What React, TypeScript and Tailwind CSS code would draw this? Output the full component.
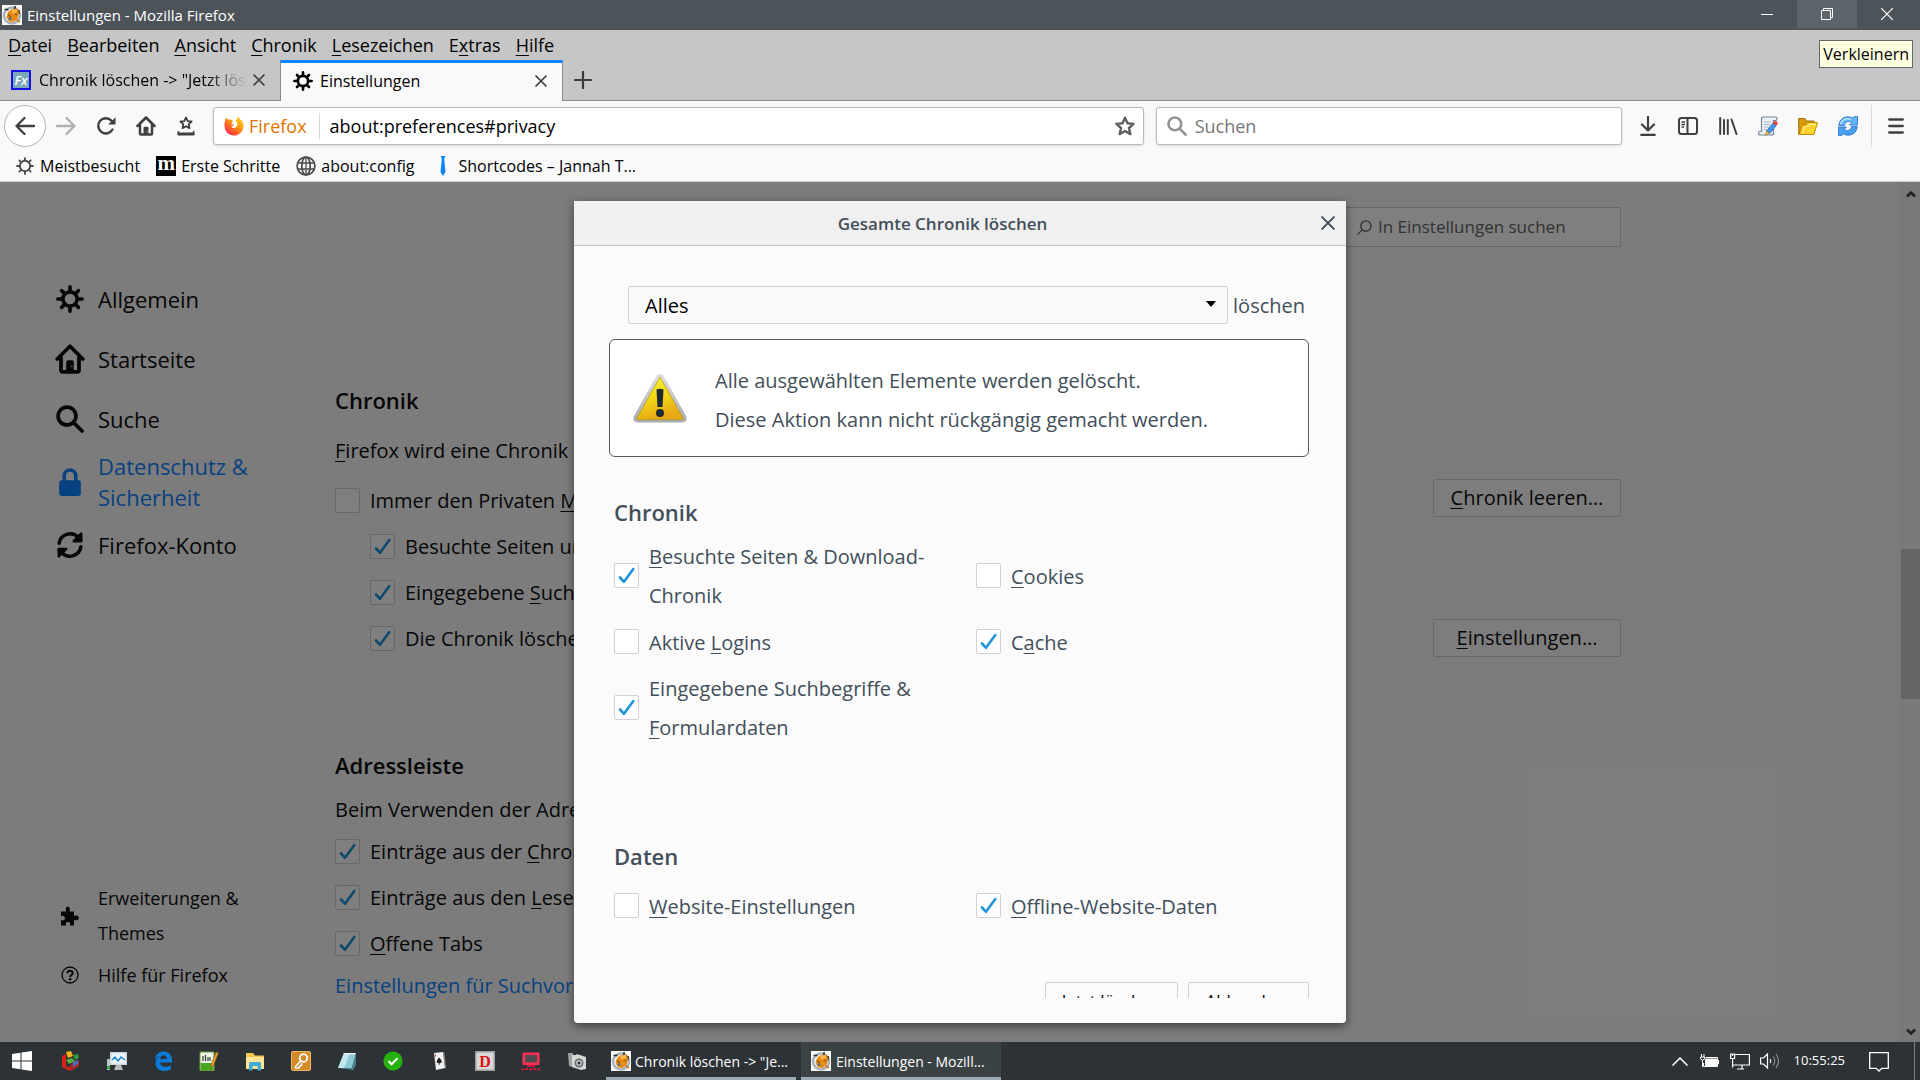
import type { ReactNode } from "react";

function K({ children }: { children: ReactNode }) {
  return <span className="underline decoration-1 underline-offset-[3px]">{children}</span>;
}

/* ---------- monochrome icons ---------- */

function Gear({ className = "" }: { className?: string }) {
  return (
    <svg viewBox="0 0 16 16" className={className} fill="none" stroke="currentColor" strokeLinecap="round" aria-hidden="true">
      <circle cx="8" cy="8" r="4.1" strokeWidth="2.1" />
      <path strokeWidth="2.1" d="M8 1.1v1.9M8 13v1.9M1.1 8H3M13 8h1.9M3.2 3.2l1.2 1.2M11.6 11.6l1.2 1.2M3.2 12.8l1.2-1.2M11.6 4.400l1.2-1.2" />
    </svg>
  );
}

function ThinGear({ className = "" }: { className?: string }) {
  return (
    <svg viewBox="0 0 16 16" className={className} fill="none" stroke="currentColor" strokeLinecap="round" aria-hidden="true">
      <circle cx="8" cy="8" r="4.6" strokeWidth="1.700" />
      <path strokeWidth="1.700" d="M8 1v1.500M8 13.500V15M1 8h1.500M13.500 8H15M3.050 3.050l1 1M11.950 11.950l1 1M3.050 12.950l1-1M11.950 4.050l1-1" />
    </svg>
  );
}

function House({ className = "" }: { className?: string }) {
  return (
    <svg viewBox="0 0 16 16" className={className} fill="none" stroke="currentColor" strokeLinecap="round" strokeLinejoin="round" aria-hidden="true">
      <path strokeWidth="2" d="M1.2 8 8 1.2 14.8 8M3.2 7v7a.8.8 0 0 0 .8.8h8a.8.8 0 0 0 .8-.8V7" />
      <path fill="currentColor" stroke="none" d="M6 15V9.6a1 1 0 0 1 1-1h2a1 1 0 0 1 1 1V15z" />
      <circle cx="8.9" cy="12" r=".5" fill="#fff" stroke="none" opacity=".6" />
    </svg>
  );
}

function Lens({ className = "" }: { className?: string }) {
  return (
    <svg viewBox="0 0 16 16" className={className} fill="none" stroke="currentColor" strokeWidth="2.100" strokeLinecap="round" aria-hidden="true">
      <circle cx="6.3" cy="6.3" r="5.1" />
      <path d="m10.2 10.2 4.7 4.7" />
    </svg>
  );
}

function ThinLens({ className = "" }: { className?: string }) {
  return (
    <svg viewBox="0 0 16 16" className={className} fill="none" stroke="currentColor" strokeWidth="1.400" strokeLinecap="round" aria-hidden="true">
      <circle cx="9.500" cy="6.500" r="5.500" />
      <path d="M5.500 10.500 1 15" />
    </svg>
  );
}

function Lock({ className = "" }: { className?: string }) {
  return (
    <svg viewBox="0 0 16 16" className={className} fill="currentColor" aria-hidden="true">
      <rect x="1.800" y="7" width="12.400" height="9" rx="1.400" />
      <path fill="none" stroke="currentColor" strokeWidth="2" d="M4.700 8V4.400a3.300 3.300 0 0 1 6.600 0V8" />
    </svg>
  );
}

function Sync({ className = "" }: { className?: string }) {
  return (
    <svg viewBox="0 0 16 16" className={className} fill="none" stroke="currentColor" strokeWidth="2" strokeLinecap="round" strokeLinejoin="round" aria-hidden="true">
      <path d="M1.800 7A6.300 6.300 0 0 1 12.600 3.600L14.200 5M14.200 9A6.300 6.300 0 0 1 3.400 12.400L1.800 11" />
      <path fill="currentColor" strokeWidth="1.400" d="M14.400 1.500v4.300h-4.300zM1.600 14.500v-4.300h4.300z" />
    </svg>
  );
}

function Puzzle({ className = "" }: { className?: string }) {
  return (
    <svg viewBox="0 0 18 20" className={className} fill="currentColor" aria-hidden="true">
      <path d="M0 5.500h5.200C4.400 4 4.600.6 6.800.6S9.200 4 8.400 5.500H13V10c1.400-.8 4.800-.8 4.800 1.900S14.400 14.600 13 13.800V19.500H8.800c.7-1.500.5-3.600-1.800-3.600s-2.500 2.100-1.800 3.600H0V14c1.500.8 3.900.6 3.900-1.700S1.500 9.700 0 10.400z" />
    </svg>
  );
}

function HelpRing({ className = "" }: { className?: string }) {
  return (
    <svg viewBox="0 0 18 18" className={className} fill="none" stroke="currentColor" aria-hidden="true">
      <circle cx="9" cy="9" r="8" strokeWidth="1.300" />
      <path strokeWidth="2" d="M6.300 7.200C6.300 3.900 11.700 3.900 11.700 7.100 11.700 9 9.100 8.900 9.100 11" />
      <circle cx="9.100" cy="13.300" r="1.300" fill="currentColor" stroke="none" />
    </svg>
  );
}

function Cross({ className = "" }: { className?: string }) {
  return (
    <svg viewBox="0 0 12 12" className={className} fill="none" stroke="currentColor" strokeWidth="1.700" strokeLinecap="round" aria-hidden="true">
      <path d="m1 1 10 10M11 1 1 11" />
    </svg>
  );
}

function Star({ className = "" }: { className?: string }) {
  return (
    <svg viewBox="0 0 16 16" className={className} fill="none" stroke="currentColor" strokeWidth="1.900" strokeLinejoin="round" aria-hidden="true">
      <path d="m8 1.300 2 4.500 4.900.5-3.700 3.300 1.100 4.900L8 12l-4.300 2.500 1.100-4.900L1.100 6.300 6 5.800z" />
    </svg>
  );
}

function Arrow({ className = "" }: { className?: string }) {
  return (
    <svg viewBox="0 0 20 20" className={className} fill="none" stroke="currentColor" strokeWidth="2.300" strokeLinecap="round" strokeLinejoin="round" aria-hidden="true">
      <path d="M19 10H1.500M9.500 2 1.500 10l8 8" />
    </svg>
  );
}

function Reload() {
  return (
    <svg viewBox="0 0 20 20" className="size-5" fill="none" stroke="currentColor" strokeWidth="2.400" strokeLinecap="round" aria-hidden="true">
      <path d="M16.500 13.500A7.600 7.600 0 1 1 15.400 4.600L17 6.200" />
      <path fill="currentColor" stroke="none" d="M19.500 1.200v7.300h-7.300z" />
    </svg>
  );
}

function StarTray() {
  return (
    <svg viewBox="0 0 20 22" className="h-5 w-[18px]" fill="none" stroke="currentColor" strokeWidth="2" strokeLinejoin="round" strokeLinecap="round" aria-hidden="true">
      <path d="m10 1.500 1.900 4 4.300.5-3.200 3 .9 4.400-3.900-2.200-3.900 2.200.9-4.400-3.200-3 4.300-.5z" />
      <path d="M1.500 17.500v3h17v-3" />
      <path d="M2 19.500h16" strokeWidth="2.500" />
    </svg>
  );
}

/* ---------- coloured icons ---------- */

function ProfileIcon() {
  return (
    <svg viewBox="0 0 20 20" className="size-5 shrink-0" aria-hidden="true">
      <rect width="20" height="20" fill="#fbfaf4" />
      <circle cx="10" cy="10.500" r="8" fill="none" stroke="#a9b3bd" strokeWidth="2.600" />
      <path d="M2.500 4.500h4M13 1v5M17 5v4" stroke="#2b2b2b" strokeWidth="1.600" />
      <path d="M6 7 9 4.500 15 3.500l2 3.500-1 6-4 4-5-.5L4.500 12z" fill="#e98a12" />
      <path d="m9 5 5-1 1 3-4 2z" fill="#ffb94a" />
      <path d="M6 9.500 9 12M12.500 9l3 1" stroke="#8a5410" strokeWidth="1.200" />
      <circle cx="8" cy="13.500" r="1.600" fill="#5d7690" />
      <path d="M14.500 14.500 18 17" stroke="#c96a08" strokeWidth="1.500" />
    </svg>
  );
}

function FirefoxLogo() {
  return (
    <svg viewBox="0 0 20 20" className="size-5 shrink-0" aria-hidden="true">
      <defs>
        <linearGradient id="fox" x1="1" y1="0" x2="0.200" y2="1">
          <stop offset="0" stopColor="#ffe226" />
          <stop offset=".45" stopColor="#ff9a12" />
          <stop offset="1" stopColor="#ff1f4b" />
        </linearGradient>
      </defs>
      <path fill="url(#fox)" d="M2 1.500c.8.900 1.500 1.700 2.200 2.200C5.700 3.200 8 3.400 9 5L7.500 7.500c0 1 1.500 1.300 2.600 1-.2 1.300-1.600 1.900-2.600 2 .8 1.900 3.600 2 5 .3 1.600-2 .9-4.700-1-6.300C12.600 4 13.600 3.200 13 .8c2 .6 3 2 3.400 3.200L17 3.500c1.700 1.800 2.800 4.300 2.500 7.200C19 15.800 15 19.500 10 19.500S.8 15.600.5 10.500C.300 7 1 3.800 2 1.500z" />
    </svg>
  );
}

function FxIcon() {
  return (
    <span className="flex size-5 shrink-0 items-center justify-center border-2 border-[#1212e8] bg-[#7ba7b8] text-[13px] leading-none font-semibold text-white italic">Fx</span>
  );
}

function ScriptEdit() {
  return (
    <svg viewBox="0 0 20 20" className="size-5" aria-hidden="true">
      <path d="M5 1h12.500c2 0 2 3.500 0 3.500H15.500V17c0 1.500-1 2-2 2H2C0 19 0 15.500 2 15.500h1.500V3c0-1.300.5-2 1.500-2z" fill="#eef2f7" stroke="#76859a" strokeWidth="1.200" />
      <path d="M6 6h7M6 8.500h6M6 11h5M6 13.500h3" stroke="#a9b6c8" />
      <path d="m8.500 15 6.500-8 3.300 2.500-6.500 8z" fill="#3f97ea" stroke="#1c4f9b" strokeWidth=".6" />
      <path d="m15 7 1.500-1.700c1.500-.8 3.800 1 3 2.700L18.300 9.500z" fill="#e8432e" />
      <path d="m8.500 15-1.200 4.300 4.500-1.800z" fill="#f3c14c" stroke="#8a6a20" strokeWidth=".5" />
    </svg>
  );
}

function OpenFolder() {
  return (
    <svg viewBox="0 0 20 20" className="size-5" aria-hidden="true">
      <path d="M.7 18V2.500h6L8.500 5H16v13z" fill="#d99a08" stroke="#8f6400" strokeWidth=".9" />
      <path d="M1 18.500 4.500 9h3.500l1.200-2.500h10.300L16 18.500z" fill="#ffd22e" stroke="#b88304" strokeWidth=".9" />
      <path d="m4.500 17 2.300-6.500h3.200l1-2h7" fill="none" stroke="#fff0a0" strokeWidth="1" />
    </svg>
  );
}

function BlueSync() {
  return (
    <svg viewBox="0 0 20 20" className="size-5" aria-hidden="true">
      <path d="M.8 9.500C1 3 8-1.500 14.500 2L16.500.5h3v8.500h-8L14 6.500C10.500 4.500 7 5.800 6.500 9.500z" fill="#63b5f5" stroke="#2a78cf" strokeWidth=".9" />
      <path d="M19.200 10.500C19 17 12 21.500 5.500 18L3.500 19.500h-3V11h8L6 13.500c3.500 2 7 .7 7.500-3z" fill="#4a9eec" stroke="#2a78cf" strokeWidth=".9" />
      <path d="M2.500 8C3.500 4 8 1.500 13 3.500" stroke="#bfe2ff" fill="none" strokeWidth="1.300" />
    </svg>
  );
}

function Warning() {
  return (
    <svg viewBox="0 0 54 50" className="h-[50px] w-[54px] shrink-0" role="img" aria-label="Warnung">
      <defs>
        <linearGradient id="warn" x1="0" y1="0" x2="0.300" y2="1">
          <stop offset="0" stopColor="#fbe94a" />
          <stop offset=".5" stopColor="#f2dd16" />
          <stop offset="1" stopColor="#e8a914" />
        </linearGradient>
        <linearGradient id="rim" x1="0" y1="0" x2="0" y2="1">
          <stop offset="0" stopColor="#e2e2e2" />
          <stop offset="1" stopColor="#a9a9a9" />
        </linearGradient>
      </defs>
      <path d="M23.500 2.500Q27-1 30.500 2.500L53 43q2 6-3.500 6.500h-45Q-1 49 1 43z" fill="url(#rim)" />
      <path d="M27 4 50 45q.3 1.500-1.500 1.500h-43Q3.700 46.500 4 45z" fill="url(#warn)" stroke="#b79a12" strokeWidth=".8" />
      <path d="M23.500 16.500q3.500-1.500 7 0l-1 17.500h-5z" fill="#1f2a33" />
      <circle cx="27" cy="40" r="4" fill="#1f2a33" />
    </svg>
  );
}

/* ---------- building blocks ---------- */

function Check({ id, checked = false, className = "", children }: { id: string; checked?: boolean; className?: string; children: ReactNode }) {
  return (
    <div className={`flex items-center gap-2.5 ${className}`}>
      <span className="relative flex size-[25px] shrink-0">
        <input id={id} type="checkbox" defaultChecked={checked} className="peer size-full appearance-none rounded-[2px] border border-[#d0d0d5] bg-white" />
        <svg viewBox="0 0 25 25" className="pointer-events-none absolute inset-0 hidden peer-checked:block" fill="none" stroke="#1e93d6" strokeWidth="2.600" strokeLinecap="round" strokeLinejoin="round" aria-hidden="true">
          <path d="m6 14.500 4 4.300L19.300 6" />
        </svg>
      </span>
      <label htmlFor={id} className="pt-0.5">{children}</label>
    </div>
  );
}

function NavItem({ icon, active = false, children }: { icon: ReactNode; active?: boolean; children: ReactNode }) {
  return (
    <a href="#privacy" className={`flex min-h-[60px] items-center gap-3.5 py-0.5 text-[22px] leading-[31px] ${active ? "text-[#0a84ff]" : "text-[#0c0c0d]"}`}>
      <span className="flex w-7 shrink-0 justify-center">{icon}</span>
      <span>{children}</span>
    </a>
  );
}

function TitleBar() {
  return (
    <header className="flex h-[30px] shrink-0 items-center bg-[#4c5359] pr-[3px] pl-0.5 text-[15px] text-white">
      <ProfileIcon />
      <h1 className="ml-[5px] flex-1">Einstellungen - Mozilla Firefox</h1>
      <button aria-label="Minimieren" className="flex h-7 w-[60px] items-center justify-center self-start"><span className="h-px w-3 bg-white" /></button>
      <button aria-label="Verkleinern" className="flex h-7 w-[60px] items-center justify-center self-start bg-[#5c656b]">
        <svg viewBox="0 0 12 12" className="size-3" fill="none" stroke="#fff" aria-hidden="true"><path d="M.5 2.500h9v9h-9zM2.500 2.500v-2h9v9h-2" /></svg>
      </button>
      <button aria-label="Schließen" className="flex h-7 w-[60px] items-center justify-center self-start">
        <svg viewBox="0 0 12 12" className="size-3" fill="none" stroke="#fff" strokeWidth="1.200" aria-hidden="true"><path d="m0 0 12 12M12 0 0 12" /></svg>
      </button>
    </header>
  );
}

function Browser() {
  return (
    <div className="shrink-0 bg-[#c6c6c6]">
      <nav className="flex h-[30px] items-center gap-[15px] px-2 text-[18px]">
        <button><K>D</K>atei</button>
        <button><K>B</K>earbeiten</button>
        <button><K>A</K>nsicht</button>
        <button><K>C</K>hronik</button>
        <button><K>L</K>esezeichen</button>
        <button>E<K>x</K>tras</button>
        <button><K>H</K>ilfe</button>
      </nav>
      <div className="flex h-[41px] border-b border-[#8a8a8a] text-[16px]">
        <div className="flex w-[280px] items-center pr-[15px] pl-[11px]">
          <FxIcon />
          <span className="ml-2 flex-1 overflow-hidden mask-r-from-80% whitespace-nowrap">Chronik löschen -&gt; "Jetzt lösc</span>
          <button aria-label="Tab schließen" className="ml-1.5 text-[#3c3c3c]"><Cross className="size-3" /></button>
        </div>
        <div className="-mb-px flex w-[283px] items-center border-x border-t-3 border-x-[#8a8a8a] border-t-[#0a84ff] bg-[#f9f9fa] pr-[15px] pb-0.5 pl-3">
          <Gear className="size-5 text-black" />
          <span className="ml-[7px] flex-1">Einstellungen</span>
          <button aria-label="Tab schließen" className="text-[#3c3c3c]"><Cross className="size-3" /></button>
        </div>
        <button aria-label="Neuer Tab" className="ml-[11px] text-[#3c3c3c]">
          <svg viewBox="0 0 18 18" className="size-[18px]" stroke="currentColor" strokeWidth="2.200" strokeLinecap="round" aria-hidden="true"><path d="M9 1v16M1 9h16" /></svg>
        </button>
      </div>
      <div className="flex h-12 items-center bg-[#f9f9fa] pt-0.5 pr-4 pl-1 text-[#3f3f40]">
        <button aria-label="Zurück" className="flex size-[42px] items-center justify-center rounded-full border border-[#b4b4b4] bg-white"><Arrow className="size-5" /></button>
        <button aria-label="Vor" className="flex w-10 justify-center text-[#b0b0b0]"><Arrow className="size-5 rotate-180" /></button>
        <button aria-label="Neu laden" className="flex w-10 justify-center"><Reload /></button>
        <button aria-label="Startseite" className="flex w-10 justify-center"><House className="size-5" /></button>
        <button aria-label="Lesezeichen anzeigen" className="flex w-10 justify-center"><StarTray /></button>
        <div className="ml-[7px] flex h-[38px] min-w-0 flex-[910] items-center rounded-[3px] border border-[#b9b9ba] bg-white pr-2 pl-2.5 shadow-sm">
          <FirefoxLogo />
          <span className="ml-[5px] text-[18px] text-[#e07400]">Firefox</span>
          <span className="mr-2.5 ml-3 h-[26px] w-px bg-[#d7d7db]" />
          <input aria-label="Adresse" defaultValue="about:preferences#privacy" className="min-w-0 flex-1 text-[18px] text-black outline-none" />
          <button aria-label="Lesezeichen hinzufügen" className="text-[#5f5f60]"><Star className="size-5" /></button>
        </div>
        <div className="ml-3 flex h-[38px] min-w-0 flex-[444] items-center gap-2 rounded-[3px] border border-[#b9b9ba] bg-white px-2.5 shadow-sm">
          <Lens className="size-5 text-[#939393]" />
          <input aria-label="Suchen" placeholder="Suchen" className="min-w-0 flex-1 text-[18px] outline-none placeholder:text-[#777]" />
        </div>
        <div className="ml-1.5 flex items-center">
          <button aria-label="Downloads" className="flex w-10 justify-center">
            <svg viewBox="0 0 16 20" className="h-5 w-4" fill="none" stroke="currentColor" strokeWidth="2.200" strokeLinecap="round" strokeLinejoin="round" aria-hidden="true"><path d="M8 1v13M2 8.500l6 6 6-6M1.200 18.800h13.600" /></svg>
          </button>
          <button aria-label="Seitenleiste" className="flex w-10 justify-center">
            <svg viewBox="0 0 20 18" className="h-[18px] w-5" fill="none" stroke="currentColor" strokeWidth="2" aria-hidden="true"><rect x="1" y="1" width="18" height="16" rx="2.500" /><path d="M9.500 1v16" /><path strokeWidth="1.300" d="M3.500 5h3.500M3.500 7.500h3.500M3.500 10h2.500" /></svg>
          </button>
          <button aria-label="Bibliothek" className="flex w-10 justify-center">
            <svg viewBox="0 0 19 18" className="h-[18px] w-[19px]" fill="none" stroke="currentColor" strokeWidth="2" strokeLinecap="round" aria-hidden="true"><path d="M1.200 1v16M5 3v14M8.800 3v14M12.500 2.500 17.500 17" /></svg>
          </button>
          <button aria-label="Skript bearbeiten" className="flex w-10 justify-center"><ScriptEdit /></button>
          <button aria-label="Ordner öffnen" className="flex w-10 justify-center"><OpenFolder /></button>
          <button aria-label="Synchronisieren" className="flex w-10 justify-center"><BlueSync /></button>
        </div>
        <span className="ml-[3px] h-[42px] w-px bg-[#d9d9da]" />
        <button aria-label="Menü" className="ml-4">
          <svg viewBox="0 0 16 16" className="size-4" stroke="currentColor" strokeWidth="2.300" strokeLinecap="round" aria-hidden="true"><path d="M1.200 1.500h13.600M1.200 8h13.600M1.200 14.500h13.600" /></svg>
        </button>
      </div>
      <div className="flex h-[33px] items-center border-b border-[#cfcfcf] bg-[#f9f9fa] pt-px pl-4 text-[16px] text-black">
        <a href="#meist" className="flex items-center gap-1.5"><ThinGear className="size-[18px] text-[#4a4a4a]" />Meistbesucht</a>
        <a href="#erste" className="ml-4 flex items-center gap-[5px]">
          <span className="flex size-5 items-center justify-center bg-black pb-1 font-['Liberation_Serif',serif] text-[21px] leading-none font-bold text-white">m</span>
          Erste Schritte
        </a>
        <a href="#config" className="ml-4 flex items-center gap-[5px]">
          <svg viewBox="0 0 20 20" className="size-5" fill="none" stroke="#4a4a4a" strokeWidth="1.700" aria-hidden="true"><circle cx="10" cy="10" r="8.900" /><ellipse cx="10" cy="10" rx="4.200" ry="8.900" /><path d="M10 1v18M1.500 7h17M1.500 13h17" strokeWidth="1.300" /></svg>
          about:config
        </a>
        <a href="#shortcodes" className="ml-[18px] flex items-center gap-1.5">
          <svg viewBox="0 0 20 20" className="size-5" fill="#0b87f5" aria-hidden="true"><path d="M7.700 0h4.600L11.200 3l1.300 13L10 20l-2.500-4L8.800 3z" /></svg>
          Shortcodes – Jannah T...
        </a>
      </div>
    </div>
  );
}

function Preferences() {
  const button = "h-[38px] rounded-[2px] border border-[#d0d0d5] bg-[#fbfbfb] text-[20px]";
  const row = "h-[46px]";
  return (
    <div className="flex h-full overflow-hidden bg-[#f9f9fa] text-[20px] text-[#0c0c0d]">
      <nav className="flex w-[335px] shrink-0 flex-col pt-[87px] pr-16 pb-[43px] pl-14">
        <NavItem icon={<Gear className="size-7" />}>Allgemein</NavItem>
        <NavItem icon={<House className="size-[30px] shrink-0" />}>Startseite</NavItem>
        <NavItem icon={<Lens className="size-7" />}>Suche</NavItem>
        <NavItem active icon={<Lock className="size-7" />}>Datenschutz &amp; Sicherheit</NavItem>
        <NavItem icon={<Sync className="size-7" />}>Firefox-Konto</NavItem>
        <a href="#addons" className="mt-auto flex items-center gap-3.5 text-[18px] leading-[35px]">
          <span className="flex w-7 shrink-0 justify-center"><Puzzle className="h-5 w-[18px]" /></span>
          <span>Erweiterungen &amp;<br />Themes</span>
        </a>
        <a href="#help" className="flex h-12 items-center gap-3.5 text-[18px]">
          <span className="flex w-7 shrink-0 justify-center"><HelpRing className="size-[18px]" /></span>
          <span>Hilfe für Firefox</span>
        </a>
      </nav>
      <main className="min-w-0 max-w-[1286px] flex-1">
        <div className="mt-[25px] ml-auto flex h-10 w-[360px] items-center gap-1.5 rounded-[2px] border border-[#d0d0d5] bg-white pl-[95px]">
          <ThinLens className="size-[15px] text-[#666]" />
          <input aria-label="In Einstellungen suchen" placeholder="In Einstellungen suchen" className="min-w-0 flex-1 text-[17px] outline-none placeholder:text-[#666]" />
        </div>
        <h2 className="mt-[138px] text-[22px] leading-[30px] font-semibold">Chronik</h2>
        <p className="mt-4 leading-10"><K>F</K>irefox wird eine Chronik</p>
        <div className="mt-1.5 flex justify-between">
          <div className="w-[239px] overflow-hidden whitespace-nowrap">
            <Check id="p1" className={row}>Immer den Privaten <K>M</K></Check>
            <div className="pl-[35px]">
              <Check id="p2" checked className={row}>Besuchte Seiten un</Check>
              <Check id="p3" checked className={row}>Eingegebene <K>S</K>uch</Check>
              <Check id="p4" checked className={row}>Die Chronik lösche</Check>
            </div>
          </div>
          <div className="flex w-[188px] flex-col gap-[102px] pt-0.5">
            <button className={button}><K>C</K>hronik leeren…</button>
            <button className={button}><K>E</K>instellungen…</button>
          </div>
        </div>
        <h2 className="mt-[89px] text-[22px] leading-[30px] font-semibold">Adressleiste</h2>
        <div className="mt-3 w-[239px] overflow-hidden whitespace-nowrap">
          <p className="leading-9">Beim Verwenden der Adre</p>
          <Check id="a1" checked className={row}>Einträge aus der <K>C</K>hron</Check>
          <Check id="a2" checked className={row}>Einträge aus den <K>L</K>esez</Check>
          <Check id="a3" checked className={row}><K>O</K>ffene Tabs</Check>
          <a href="#suche" className="leading-[40px] text-[#0a84ff]">Einstellungen für Suchvors</a>
        </div>
      </main>
      <div className="ml-auto flex w-5 shrink-0 flex-col items-center border-l border-[#f0f0f0] bg-[#f2f2f2]">
        <svg viewBox="0 0 10 8" className="mt-2 h-2 w-2.5" fill="none" stroke="#404040" strokeWidth="2.500" aria-hidden="true"><path d="m1 6.500 4-4 4 4" /></svg>
        <div className="mt-[351px] h-[150px] w-full bg-[#cdcdcd]" />
        <svg viewBox="0 0 10 8" className="mt-auto mb-1.5 h-2 w-2.5" fill="none" stroke="#404040" strokeWidth="2.500" aria-hidden="true"><path d="m1 1.500 4 4 4-4" /></svg>
      </div>
    </div>
  );
}

function ClearDialog() {
  const button = "h-[38px] rounded-[2px] border border-[#d0d0d5] px-4 text-[17px] text-black";
  return (
    <div role="dialog" aria-labelledby="dlg-title" className="flex h-full w-[772px] max-w-full flex-col rounded-b bg-[#fbfbfb] text-[20px] text-[#424f5a] shadow-[0_3px_10px_rgba(0,0,0,0.5)]">
      <div className="flex h-[45px] shrink-0 items-center border-b border-[#c3c3c3] bg-[#f0f0f0] pr-[11px]">
        <h2 id="dlg-title" className="flex-1 pt-0.5 text-center text-[17px] font-semibold">Gesamte Chronik löschen</h2>
        <button aria-label="Schließen" className="pl-2.5"><Cross className="size-3.5" /></button>
      </div>
      <div className="mb-[25px] min-h-0 flex-1 overflow-hidden pt-10 pr-[37px] pl-[35px]">
        <div className="flex items-center gap-[5px] pr-1 pl-[19px]">
          <div className="relative flex-1">
            <select id="range" className="h-[38px] w-full appearance-none rounded-[2px] border border-[#d0d0d5] bg-[#fafafa] px-4 pt-0.5 text-black">
              <option>Alles</option>
            </select>
            <svg viewBox="0 0 10 6" className="pointer-events-none absolute top-[15px] right-3 h-1.5 w-2.5" aria-hidden="true"><path d="M0 0h10L5 6z" /></svg>
          </div>
          <label htmlFor="range" className="pt-0.5">löschen</label>
        </div>
        <div className="mt-[15px] flex items-center gap-7 rounded-md border border-[#5a5a5a] bg-white py-[17px] pl-[23px] leading-[39px]">
          <Warning />
          <p className="pt-1">Alle ausgewählten Elemente werden gelöscht.<br />Diese Aktion kann nicht rückgängig gemacht werden.</p>
        </div>
        <fieldset className="mt-10 pl-[5px]">
          <legend className="text-[22px] leading-[30px] font-semibold">Chronik</legend>
          <div className="mt-2 grid grid-cols-[362px_1fr] leading-[39px]">
            <Check id="c1" checked><K>B</K>esuchte Seiten &amp; Download-<br />Chronik</Check>
            <Check id="c2"><K>C</K>ookies</Check>
            <Check id="c3" className="h-[52px]">Aktive <K>L</K>ogins</Check>
            <Check id="c4" checked>C<K>a</K>che</Check>
            <Check id="c5" checked>Eingegebene Suchbegriffe &amp;<br /><K>F</K>ormulardaten</Check>
          </div>
        </fieldset>
        <fieldset className="mt-[94px] pl-[5px]">
          <legend className="text-[22px] leading-[30px] font-semibold">Daten</legend>
          <div className="mt-2 grid grid-cols-[362px_1fr] leading-[39px]">
            <Check id="d1" className="h-[53px]"><K>W</K>ebsite-Einstellungen</Check>
            <Check id="d2" checked><K>O</K>ffline-Website-Daten</Check>
          </div>
        </fieldset>
        <div className="mt-[50px] flex justify-end gap-2.5">
          <button className={button}>Jetzt löschen</button>
          <button className={button}>Abbrechen</button>
        </div>
      </div>
    </div>
  );
}

/* ---------- taskbar ---------- */

const pinned: { name: string; art: ReactNode }[] = [
  {
    name: "Farbwürfel",
    art: <><path d="M1 5 5 3v12l4 2v3l-8-4z" fill="#d8201c" /><path d="m5 1 5-1 2 5-5 2z" fill="#f4b51a" /><path d="m12 4 5-1 1 4-4 2z" fill="#2f9a3c" /><path d="m5 9 6-2 3 3-6 3z" fill="#55b03a" /><path d="m11 12 7-3v6l-8 5-2-3z" fill="#b3261f" /><path d="m12 11 5-2v4l-5 3z" fill="#4a6bc0" /></>,
  },
  {
    name: "Systemmonitor",
    art: <><path d="M3 1h17v13H3z" fill="#cfd6db" /><path d="M4.500 2.500h14v10h-14z" fill="#eaf6fd" /><path d="m5 9 3-3 3 4 3-4 4 3" fill="none" stroke="#1d7fc4" strokeWidth="1.400" /><path d="M9 14h5l2 5H7z" fill="#b4bbc0" /><path d="M0 8h3v11H0z" fill="#b9c4bb" /><path d="M0 15h3v3H0z" fill="#3fae3f" /></>,
  },
  {
    name: "Edge",
    art: <path d="M1.500 9C2.500 3 6.500.5 10.500.5c5 0 8.500 3.500 8.500 8.500v2.500H7c.2 3 2.800 4.300 5.500 4.300 2.200 0 4-.6 5.500-1.500v4c-1.700 1-4 1.600-6.500 1.600-5.500 0-9-3.200-9-8 0-3 1.700-5.700 4.500-7-3 .5-4.500 2.300-5.500 4.100zM7.200 8h6.600c0-2.400-1.300-3.700-3.200-3.700S7.400 5.700 7.200 8z" fill="#0b7ad8" />,
  },
  {
    name: "Texteditor",
    art: <><path d="M1 1h14v18.500H1z" fill="#eef5e8" stroke="#6a9a3a" /><path d="M1.500 12h13v7h-13z" fill="#4aa520" /><path d="M4 5v5M6.500 4v6M9 6v4M11 6v4" stroke="#333" strokeWidth="1.200" /><path d="m12 14 5-13 2.500 1-5 12.500-2.500 2z" fill="#e3a52a" stroke="#7d5210" strokeWidth=".6" /></>,
  },
  {
    name: "Explorer",
    art: <><path d="M1 2h7l2 2.500h9V18H1z" fill="#f3c64f" /><path d="M1 6h18v12H1z" fill="#fde597" /><path d="M4 19.500v-7q0-1.500 1.500-1.500h9q1.500 0 1.500 1.500v7h-3.500V15h-5v4.500z" fill="#3fa9dc" /></>,
  },
  {
    name: "Schlüssel",
    art: <><rect x=".5" y=".5" width="19" height="19" rx="1.500" fill="#d28a2a" stroke="#f0b968" /><circle cx="12.500" cy="7" r="3.800" fill="none" stroke="#fff" strokeWidth="1.800" /><path d="m10 9.500-5.500 6V17H8l.5-2 2-.5V12" fill="none" stroke="#fff" strokeWidth="1.500" /></>,
  },
  {
    name: "Notizblock",
    art: <><path d="M7 2h12l-4 15H1z" fill="#8cc8d6" /><path d="M7 2h6L7 17H1z" fill="#c5e6ec" /><path d="M7 2h12l-.5 1.500h-12z" fill="#e9eef0" /><path d="M1 17h14l4-15v12l-3 5z" fill="#4b7f90" /></>,
  },
  {
    name: "Status",
    art: <><circle cx="10" cy="10" r="9.600" fill="#25b10c" /><path d="m5.500 10 3 3.200 6-6" fill="none" stroke="#fff" strokeWidth="2.200" /></>,
  },
  {
    name: "Karten",
    art: <><path d="m5 2 9-1 2 16-9 2z" fill="#f1f1f1" /><path d="m14 1 1.500 1 1.500 15-1 0z" fill="#8d8d8d" /><path d="M10 6.500q3.500 3 2.500 5-1 1-2 .2l.5 1.800H9.500l.3-1.800q-1.300.8-2-.2-.6-2 2.200-5z" fill="#222" /><path d="M6.500 3.500v2" stroke="#c33" /></>,
  },
  {
    name: "Wörterbuch",
    art: <><path d="M0 0h20v20H0z" fill="#9b9b9b" /><path d="M1.500 1.500h17v17h-17z" fill="#d8d8d8" /><text x="10" y="16" textAnchor="middle" fontFamily="Liberation Serif, serif" fontWeight="bold" fontSize="16" fill="#e01010">D</text></>,
  },
  {
    name: "Terminal",
    art: <><rect x="1.500" y="1.500" width="17" height="12.500" rx="1" fill="#ff2e55" /><path d="M4 4h12v7.500H4z" fill="#4d4d4d" /><path d="M6 14h8v2H6z" fill="#d01540" /><path d="M1 19.500v-1.500h1.500v1.500M5 19v-1.500h1.500V19M9 19.500v-1.500h1.500v1.500M13 19v-1.500h1.500V19M17 19.500v-1.500h1.500v1.500" fill="none" stroke="#e0173c" strokeWidth="1.200" /></>,
  },
  {
    name: "Kamera",
    art: <><path d="M1 2h5v14l-4-1z" fill="#9fa3a3" /><path d="M5 4h4l1-1 3 1 6 2v12l-5 1-9-3z" fill="#d3d6d3" /><circle cx="12" cy="12" r="4.500" fill="#6c7072" /><circle cx="12" cy="12" r="2.800" fill="#c5d3d6" /><circle cx="12" cy="12" r="1.500" fill="#2c2f31" /></>,
  },
];

function Taskbar() {
  return (
    <footer className="flex h-[38px] shrink-0 items-stretch bg-[#2d3236] text-[14px] text-white">
      <button aria-label="Start" className="flex w-12 items-center pl-3">
        <svg viewBox="0 0 20 20" className="size-5" fill="#fff" aria-hidden="true"><path d="M0 3 8.500 1.800v7.700H0zM9.500 1.600 20 0v9.500H9.500zM0 10.500h8.500v7.700L0 17zM9.500 10.500H20V20L9.500 18.400z" /></svg>
      </button>
      {pinned.map((p) => (
        <button key={p.name} aria-label={p.name} className="flex w-[46px] items-center justify-center">
          <svg viewBox="0 0 20 20" className="size-5" aria-hidden="true">{p.art}</svg>
        </button>
      ))}
      <button className="ml-1.5 flex w-[190px] items-center gap-1 border-b-3 border-[#9aabb5] pt-[3px] pl-[5px]"><ProfileIcon />Chronik löschen -&gt; "Je...</button>
      <button className="ml-[5px] flex w-[200px] items-center gap-[5px] border-b-3 border-[#9aabb5] bg-[#3a4244] pt-[3px] pl-2.5"><ProfileIcon />Einstellungen - Mozill...</button>
      <div className="ml-auto flex items-center">
        <svg viewBox="0 0 16 9" className="mr-3 h-[9px] w-4" fill="none" stroke="#fff" strokeWidth="1.500" aria-hidden="true"><path d="m.5 8.500 7.500-7.500 7.500 7.500" /></svg>
        <svg viewBox="0 0 20 14" className="mr-2.5 h-3.5 w-5" fill="none" stroke="#fff" aria-hidden="true"><path d="M5.500 3.500h12v9h-14V9M18.500 6v4M1.500 0v3M4 0v3M.5 3h4v2q-2 2.500-4 0zM2.500 6v7" /><path fill="#fff" d="M5.500 5h11v6.500h-11z" /></svg>
        <svg viewBox="0 0 20 17" className="mr-2.5 h-[17px] w-5" fill="none" stroke="#fff" strokeWidth="1.200" aria-hidden="true"><path d="M5 1.500h14.400v10.500H3M12 12v3.500M7 16h7M.6 1h4v4.500h-4zM2.600 5.500v9M2.600 1v2" /></svg>
        <svg viewBox="0 0 20 18" className="mr-3.5 h-[18px] w-5" fill="none" stroke="#fff" strokeWidth="1.200" aria-hidden="true"><path d="M.6 6v6h2.900L7.500 16V2L3.500 6zM10 7q1.500 2 0 4" /><path opacity=".45" d="M13 4.500q3.500 4.500 0 9M16 2q5 7 0 14" /></svg>
        <time className="text-[13px]">10:55:25</time>
        <button aria-label="Benachrichtigungen" className="ml-6">
          <svg viewBox="0 0 20 20" className="mt-px size-5" fill="none" stroke="#fff" strokeWidth="1.300" aria-hidden="true"><path d="M.7.7h18.600v15.600h-6.600L10 19l-2.700-2.700H.7z" /></svg>
        </button>
      </div>
      <span className="mr-[5px] ml-[25px] w-px bg-[#7c8082]" />
    </footer>
  );
}

export default function App() {
  return (
    <div className="relative flex h-screen flex-col overflow-hidden font-['Open_Sans','Noto_Sans',sans-serif] text-black">
      <TitleBar />
      <Browser />
      <div className="relative min-h-0 flex-1">
        <Preferences />
        <div className="absolute inset-0 flex justify-center bg-black/50 py-[19px]">
          <ClearDialog />
        </div>
      </div>
      <Taskbar />
      <div role="tooltip" className="absolute top-10 right-[7px] border border-[#666] bg-[#ffffe1] px-[3px] py-px text-[16px] leading-6">Verkleinern</div>
    </div>
  );
}
